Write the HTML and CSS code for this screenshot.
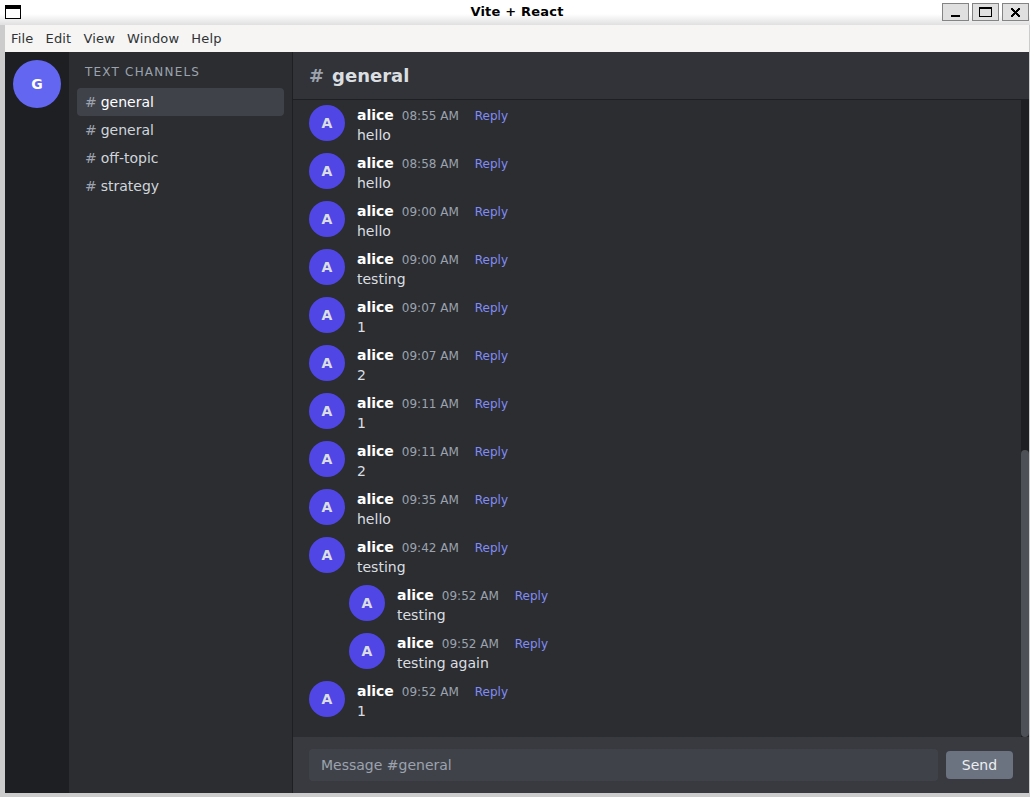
FILE: index.html
```
<!DOCTYPE html>
<html lang="en">
<head>
<meta charset="utf-8">
<title>Vite + React</title>
<link rel="stylesheet" href="styles.css">
</head>
<body>
<div class="window">
  <header class="titlebar">
    <svg class="app-icon" width="16" height="14" viewBox="0 0 16 14" shape-rendering="crispEdges"><path fill="#000" d="M0 0h16v14H0z"/><path fill="#fff" d="M1 4h14v9H1z"/></svg>
    <div class="title">Vite + React</div>
    <div class="controls">
      <span class="control"><svg width="27" height="18" viewBox="0 0 27 18" shape-rendering="crispEdges"><path fill="#000" d="M9 12h9v2H9z"/></svg></span>
      <span class="control"><svg width="27" height="18" viewBox="0 0 27 18" shape-rendering="crispEdges"><path fill="#000" fill-rule="evenodd" d="M7 4h13v10H7zM8 6v7h11V6z"/></svg></span>
      <span class="control"><svg width="27" height="18" viewBox="0 0 27 18" shape-rendering="crispEdges"><path fill="#000" d="M9 5h2v1h1v1h1v1h1v-1h1v-1h1v-1h2v2h-1v1h-1v1h-1v1h1v1h1v1h1v2h-2v-1h-1v-1h-1v-1h-1v1h-1v1h-1v1h-2v-2h1v-1h1v-1h1v-1h-1v-1h-1v-1h-1z"/></svg></span>
    </div>
  </header>
  <div class="frame">
    <nav class="menubar"><span>File</span><span>Edit</span><span>View</span><span>Window</span><span>Help</span></nav>
    <div class="app">
      <aside class="servers"><div class="server">G</div></aside>
      <aside class="channels">
        <h2 class="channels-title">TEXT CHANNELS</h2>
        <ul class="channel-list">
          <li class="channel active"><span class="hash">#</span>general</li>
          <li class="channel"><span class="hash">#</span>general</li>
          <li class="channel"><span class="hash">#</span>off-topic</li>
          <li class="channel"><span class="hash">#</span>strategy</li>
        </ul>
      </aside>
      <main class="chat">
        <header class="chat-header"><span class="hash">#</span>general</header>
        <div class="chat-body">
          <div class="messages" id="messages"></div>
          <div class="scrollbar"><div class="thumb"></div></div>
        </div>
        <form class="composer">
          <input class="composer-input" type="text" placeholder="Message #general">
          <button class="send" type="button">Send</button>
        </form>
      </main>
    </div>
  </div>
</div>
<script src="messages.js"></script>
</body>
</html>
```
FILE: styles.css
```
* { box-sizing: border-box; margin: 0; padding: 0; }
body { font-family: "DejaVu Sans", sans-serif; overflow: hidden; }
.window { display: flex; flex-direction: column; height: 797px; background: #ccc; }
.titlebar { display: grid; grid-template-columns: 1fr auto 1fr; height: 25px; padding: 0 1px 0 5px; background: linear-gradient(#fff 0, #fff 14px, #e0e0e0 25px); }
.app-icon { margin-top: 5px; }
.title { font-size: 13px; font-weight: bold; line-height: 24px; letter-spacing: 0.2px; color: #000; }
.controls { display: flex; justify-content: flex-end; gap: 3px; padding-top: 3px; }
.control { width: 27px; height: 18px; background: #e0e0e0; outline: 1px solid #848484; outline-offset: -1px; }
.control svg { display: block; }
.frame { display: flex; flex-direction: column; flex: 1; min-height: 0; margin: 0 1px 4px 5px; }
.menubar { display: flex; gap: 12px; height: 27px; padding-left: 6px; background: #f6f5f4; color: #2e3436; font-size: 13px; line-height: 27px; letter-spacing: 0.18px; }
.app { display: flex; flex: 1; min-height: 0; }
.servers { width: 64px; padding: 8px; background: #1e1f22; }
.server { display: flex; align-items: center; justify-content: center; width: 48px; height: 48px; border-radius: 50%; background: #6366f1; color: #fff; font-size: 14px; font-weight: bold; }
.channels { width: 224px; padding: 8px; border-right: 1px solid #1e1f22; background: #2b2d31; }
.channels-title { padding: 4px 8px; margin-bottom: 4px; color: #9ca3af; font-size: 12px; font-weight: normal; line-height: 16px; letter-spacing: 1.2px; }
.channel-list { list-style: none; }
.channel { display: flex; gap: 4px; height: 28px; padding: 4px 8px; border-radius: 4px; color: #d1d5db; font-size: 14px; line-height: 20px; }
.channel.active { background: #404249; color: #fff; }
.hash { color: #9ca3af; }
.chat { display: flex; flex: 1; flex-direction: column; background: #2b2d31; }
.chat-header { display: flex; align-items: center; gap: 8px; height: 48px; padding: 0 16px; border-bottom: 1px solid #1e1f22; background: #313338; color: #dbdee1; font-size: 18px; font-weight: bold; }
.chat-body { display: flex; flex: 1; min-height: 0; }
.messages { display: flex; flex: 1; flex-direction: column; gap: 8px; padding: 5px 16px 0; }
.message { display: flex; gap: 12px; height: 40px; }
.message.reply-message { padding-left: 40px; }
.avatar { display: flex; align-items: center; justify-content: center; width: 36px; height: 36px; border-radius: 50%; background: #4f46e5; color: #dbdee1; font-size: 14px; font-weight: bold; }
.meta { display: flex; align-items: baseline; gap: 8px; height: 20px; line-height: 20px; }
.author { color: #fff; font-size: 14px; font-weight: bold; }
.time { color: #9ca3af; font-size: 12px; }
.reply { margin-left: 8px; color: #818cf8; font-size: 12px; }
.text { color: #dbdee1; font-size: 14px; line-height: 20px; }
.scrollbar { display: flex; flex-direction: column; justify-content: flex-end; width: 8px; background: #1e1f22; }
.thumb { height: 287px; border-radius: 4px; background: #4e5058; }
.composer { display: flex; align-items: center; gap: 8px; height: 56px; padding: 0 16px; background: #383a40; }
.composer-input { flex: 1; min-width: 0; height: 32px; padding: 0 12px; border: 0; border-radius: 4px; background: #404249; color: #dbdee1; font: 14px "DejaVu Sans", sans-serif; }
.composer-input::placeholder { color: #9ca3af; }
.send { width: 67px; height: 28px; border: 0; border-radius: 4px; background: #6b7280; color: #edeef0; font: 14px "DejaVu Sans", sans-serif; }
```
FILE: messages.js
```
const messages = [
  ["08:55 AM", "hello"],
  ["08:58 AM", "hello"],
  ["09:00 AM", "hello"],
  ["09:00 AM", "testing"],
  ["09:07 AM", "1"],
  ["09:07 AM", "2"],
  ["09:11 AM", "1"],
  ["09:11 AM", "2"],
  ["09:35 AM", "hello"],
  ["09:42 AM", "testing"],
  ["09:52 AM", "testing", true],
  ["09:52 AM", "testing again", true],
  ["09:52 AM", "1"],
];

document.getElementById("messages").innerHTML = messages.map(([time, text, nested]) => `
  <article class="message${nested ? " reply-message" : ""}">
    <div class="avatar">A</div>
    <div>
      <div class="meta"><span class="author">alice</span><span class="time">${time}</span><span class="reply">Reply</span></div>
      <p class="text">${text}</p>
    </div>
  </article>`).join("");
```
